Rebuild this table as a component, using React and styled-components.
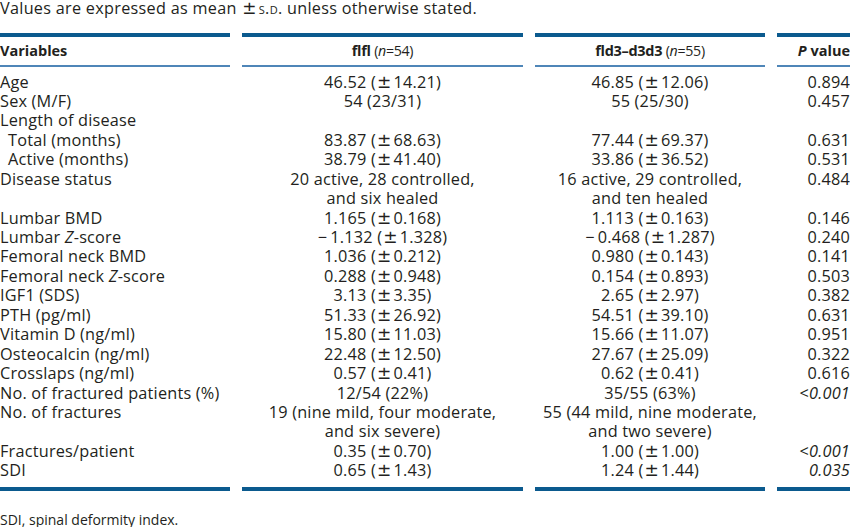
import React from "react";
import styled, { createGlobalStyle } from "styled-components";

const Global = createGlobalStyle`
  html, body { margin: 0; padding: 0; background: #fff; }
  body { font-family: "Open Sans", "Noto Sans", sans-serif; color: #231f20; }
`;

const Page = styled.div`
  width: 850px;
  font-size: 16.3px;
  line-height: 19.45px;
  letter-spacing: 0.2px;
`;

const Caption = styled.div`
  height: 33px;
  line-height: 17px;
  font-size: 16.2px;
  letter-spacing: 0.3px;
`;

const SmallCaps = styled.span`
  font-variant: small-caps;
`;

const Pm = styled.span`
  font-family: "DejaVu Sans", sans-serif;
  font-size: 1.05em;
  line-height: 0;
  margin: 0 2px 0 1px;
`;

const Grid = styled.div`
  display: grid;
  grid-template-columns: 230px 281px 230px 73px;
  column-gap: 12px;
`;

const Rule = styled.div`
  height: ${(p) => (p.$thin ? "1.5px" : "4px")};
  background: ${(p) => (p.$thin ? "#4f86b8" : "#0b5a8e")};
`;

const HeadCell = styled.div`
  font-weight: 700;
  height: 28px;
  line-height: 28px;
  text-align: ${(p) => p.$align || "left"};
  font-size: 14.5px;
  letter-spacing: ${(p) => (p.$tight ? "-0.3px" : "0")};
  white-space: nowrap;
`;

const Light = styled.span`
  font-weight: 400;
  font-size: 14.2px;
`;

const Body = styled(Grid)`
  padding: 6px 0 6px;
`;

const Cell = styled.div`
  text-align: ${(p) => p.$align || "left"};
  padding-left: ${(p) => (p.$indent ? "8px" : "0")};
  white-space: nowrap;
  height: 19.45px;
`;

const It = styled.i``;

const Footnote = styled.div`
  margin-top: 19px;
  font-size: 14px;
  letter-spacing: 0;
`;

const P = () => <Pm>{"\u00b1"}</Pm>;
const M = () => <>{"\u2212\u2009"}</>;

const rows = [
  ["Age", <>46.52 (<P />14.21)</>, <>46.85 (<P />12.06)</>, "0.894"],
  ["Sex (M/F)", "54 (23/31)", "55 (25/30)", "0.457"],
  ["Length of disease", "", "", ""],
  ["Total (months)", <>83.87 (<P />68.63)</>, <>77.44 (<P />69.37)</>, "0.631", true],
  ["Active (months)", <>38.79 (<P />41.40)</>, <>33.86 (<P />36.52)</>, "0.531", true],
  ["Disease status", "20 active, 28 controlled,", "16 active, 29 controlled,", "0.484"],
  ["", "and six healed", "and ten healed", ""],
  ["Lumbar BMD", <>1.165 (<P />0.168)</>, <>1.113 (<P />0.163)</>, "0.146"],
  [<>Lumbar <It>Z</It>-score</>, <><M />1.132 (<P />1.328)</>, <><M />0.468 (<P />1.287)</>, "0.240"],
  ["Femoral neck BMD", <>1.036 (<P />0.212)</>, <>0.980 (<P />0.143)</>, "0.141"],
  [<>Femoral neck <It>Z</It>-score</>, <>0.288 (<P />0.948)</>, <>0.154 (<P />0.893)</>, "0.503"],
  ["IGF1 (SDS)", <>3.13 (<P />3.35)</>, <>2.65 (<P />2.97)</>, "0.382"],
  ["PTH (pg/ml)", <>51.33 (<P />26.92)</>, <>54.51 (<P />39.10)</>, "0.631"],
  ["Vitamin D (ng/ml)", <>15.80 (<P />11.03)</>, <>15.66 (<P />11.07)</>, "0.951"],
  ["Osteocalcin (ng/ml)", <>22.48 (<P />12.50)</>, <>27.67 (<P />25.09)</>, "0.322"],
  ["Crosslaps (ng/ml)", <>0.57 (<P />0.41)</>, <>0.62 (<P />0.41)</>, "0.616"],
  ["No. of fractured patients (%)", "12/54 (22%)", "35/55 (63%)", <>{"<"}<It>0.001</It></>],
  ["No. of fractures", "19 (nine mild, four moderate,", "55 (44 mild, nine moderate,", ""],
  ["", "and six severe)", "and two severe)", ""],
  ["Fractures/patient", <>0.35 (<P />0.70)</>, <>1.00 (<P />1.00)</>, <>{"<"}<It>0.001</It></>],
  ["SDI", <>0.65 (<P />1.43)</>, <>1.24 (<P />1.44)</>, <It>0.035</It>],
];

const Rules = ({ thin }) => (
  <Grid>
    <Rule $thin={thin} />
    <Rule $thin={thin} />
    <Rule $thin={thin} />
    <Rule $thin={thin} />
  </Grid>
);

export default function App() {
  return (
    <Page>
      <Global />
      <Caption>
        Values are expressed as mean <P /><SmallCaps>s.d.</SmallCaps> unless otherwise stated.
      </Caption>
      <Rules />
      <Grid>
        <HeadCell>Variables</HeadCell>
        <HeadCell $align="center" $tight>
          flfl <Light>(<It>n</It>=54)</Light>
        </HeadCell>
        <HeadCell $align="center" $tight>
          fld3–d3d3 <Light>(<It>n</It>=55)</Light>
        </HeadCell>
        <HeadCell $align="right">
          <It>P</It> value
        </HeadCell>
      </Grid>
      <Rules thin />
      <Body>
        {rows.map((r, i) => (
          <React.Fragment key={i}>
            <Cell $indent={r[4]}>{r[0]}</Cell>
            <Cell $align="center">{r[1]}</Cell>
            <Cell $align="center">{r[2]}</Cell>
            <Cell $align="right">{r[3]}</Cell>
          </React.Fragment>
        ))}
      </Body>
      <Rules />
      <Footnote>SDI, spinal deformity index.</Footnote>
    </Page>
  );
}
